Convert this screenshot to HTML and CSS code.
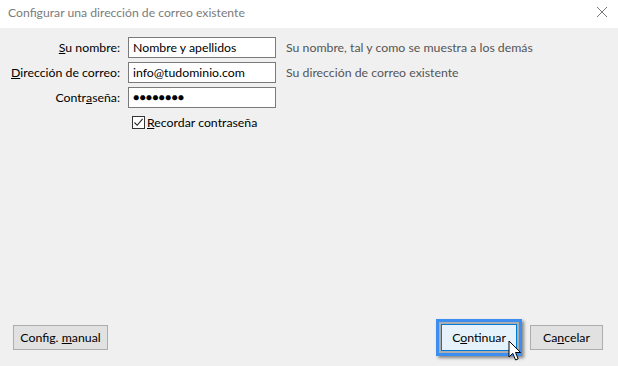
FILE: index.html
```html
<!DOCTYPE html>
<html>
	<head>
		<meta charset="utf-8" />
		<title>Configurar una dirección de correo existente</title>
	<link rel="stylesheet" href="styles.css">
	</head>
	<body>
	<div id="dialog">
		<div class="titlebar">
			<span class="title">Configurar una dirección de correo existente</span>
			<svg class="close" width="12" height="12" viewBox="0 0 12 12">
				<path d="M1 1L11 11M11 1L1 11" stroke="#7a7a7a" stroke-width="1" fill="none"/>
			</svg>
		</div>
		<div class="content">
			<div class="form">
				<label class="lbl"><u>S</u>u nombre:</label>
				<div class="field">Nombre y apellidos</div>
				<span class="hint">Su nombre, tal y como se muestra a los demás</span>

				<label class="lbl"><u>D</u>irección de correo:</label>
				<div class="field">info@tudominio.com</div>
				<span class="hint">Su dirección de correo existente</span>

				<label class="lbl">Contr<u>a</u>seña:</label>
				<div class="field pass">●●●●●●●●</div>
				<span class="hint"></span>

				<span></span>
				<div class="check">
					<span class="box">
						<svg width="11" height="11" viewBox="0 0 11 11">
							<path d="M1.5 5.5L4.2 8.3L9.6 1.8" stroke="#222" stroke-width="1.1" fill="none"/>
						</svg>
					</span>
					<span><u>R</u>ecordar contraseña</span>
				</div>
			</div>
		</div>
		<div class="footer">
			<button class="btn manual">Config. <u>m</u>anual</button>
			<div class="right">
				<div class="focusring">
					<button class="btn primary">C<u>o</u>ntinuar</button>
				</div>
				<button class="btn cancel">Ca<u>n</u>celar</button>
			</div>
		</div>
		<svg class="cursor" width="14" height="22" viewBox="0 0 14 22">
			<path d="M1 1L1 17L4.8 13.4L7.6 20L10.2 18.9L7.5 12.5L12.6 12.5Z" fill="#fff" stroke="#000" stroke-width="1" stroke-linejoin="round"/>
		</svg>
	</div>
	</body>
</html>
```

FILE: styles.css
```css
body{
	margin: 0;
	font-family: Lato, "Noto Sans", sans-serif;
	font-size: 12.3px;
	color: #000;
}
#dialog{
	position: relative;
	width: 618px;
	height: 366px;
	background: #f0f0f0;
	display: flex;
	flex-direction: column;
	overflow: hidden;
}
.titlebar{
	height: 28px;
	background: #fff;
	display: flex;
	align-items: center;
	justify-content: space-between;
	padding: 0 10px 0 8px;
}
.title{
	color: #7b7b7b;
	font-size: 12.2px;
	padding-bottom: 4px;
}
.close{
	margin-bottom: 4px;
}
.content{
	flex: 1;
	padding-top: 9px;
}
.form{
	display: grid;
	grid-template-columns: 120px 147px auto;
	column-gap: 10px;
	row-gap: 4px;
	grid-auto-rows: 21px;
	align-items: center;
}
.lbl{
	text-align: right;
}
.field{
	box-sizing: border-box;
	height: 21px;
	margin-left: -2px;
	margin-right: 1px;
	background: #fff;
	border: 1px solid #7a7a7a;
	padding: 0 4px;
	line-height: 19px;
}
.pass{
	font-size: 10.5px;
	letter-spacing: 0.1px;
	padding-left: 4px;
}
.hint{
	color: #555;
	margin-left: -1px;
}
.check{
	display: flex;
	align-items: center;
	gap: 2px;
	margin-left: 2px;
}
.box{
	box-sizing: border-box;
	width: 13px;
	height: 13px;
	border: 1px solid #333;
	background: #fff;
	display: flex;
	align-items: center;
	justify-content: center;
}
.footer{
	display: flex;
	justify-content: space-between;
	align-items: center;
	padding: 0 15px 10px 13px;
}
.btn{
	box-sizing: border-box;
	height: 25px;
	font: inherit;
	color: #000;
	background: #e1e1e1;
	border: 1px solid #adadad;
	padding: 0 4px;
	white-space: nowrap;
}
.manual{
	width: 95px;
}
.right{
	display: flex;
	align-items: center;
	gap: 8px;
}
.focusring{
	border: 3px solid #3c8ef0;
	background: #adadad;
	padding: 2px;
	box-shadow: 2px 2px 3px rgba(0,0,0,0.45);
}
.primary{
	width: 76px;
	height: 27px;
	background: #e5f1fb;
	border: 1px solid #0078d7;
}
.cancel{
	width: 73px;
}
.cursor{
	position: absolute;
	left: 508px;
	top: 340px;
}
```
